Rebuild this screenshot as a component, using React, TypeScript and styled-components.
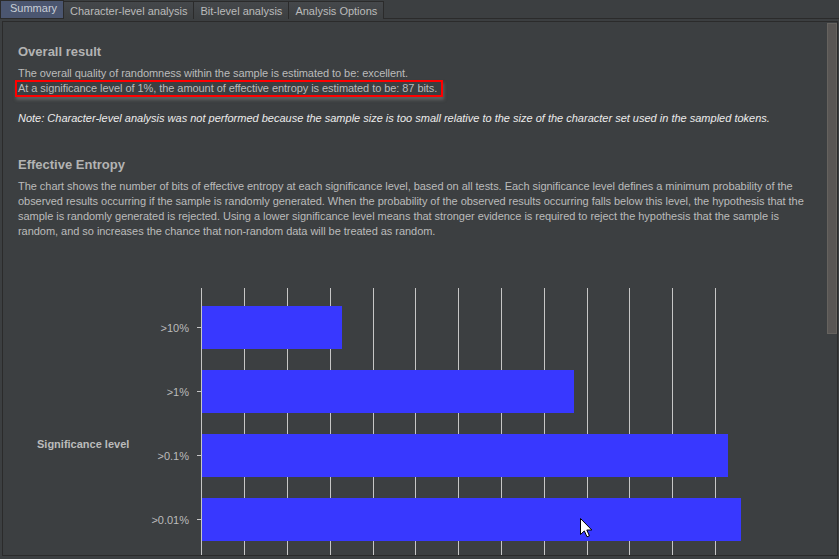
import React from "react";
import styled, { createGlobalStyle } from "styled-components";

const GlobalStyle = createGlobalStyle`
  html, body { margin: 0; padding: 0; background: #3c3f41; overflow: hidden; }
  #root { width: 839px; height: 559px; }
`;

const Root = styled.div`
  position: relative;
  width: 839px;
  height: 559px;
  display: flex;
  flex-direction: column;
  background: #3c3f41;
  font-family: "Liberation Sans", Arial, sans-serif;
  color: #bbbbbb;
  overflow: hidden;
`;

const TabBar = styled.div`
  display: flex;
  height: 19px;
  box-sizing: border-box;
  border-bottom: 1px solid #2b2b2b;
`;

const Tab = styled.div<{ $active?: boolean }>`
  display: flex;
  align-items: center;
  box-sizing: border-box;
  height: 18px;
  margin-top: ${(p) => (p.$active ? "0" : "1px")};
  padding: ${(p) => (p.$active ? "0 6px 3px 9px" : "1px 6px 0 6px")};
  border-top: 1px solid #2b2b2b;
  border-right: 1px solid #2b2b2b;
  background: ${(p) =>
    p.$active ? "#4b5670" : "linear-gradient(#45484b, #3c3f41)"};
  color: ${(p) => (p.$active ? "#c9ced6" : "#bbbbbb")};
  font-size: 11px;
  white-space: nowrap;
  &:first-child {
    border-left: 1px solid #2b2b2b;
  }
`;

const Panel = styled.div`
  flex: 1;
  display: flex;
  margin: 2px 1px 3px 2px;
  border: 1px solid #2b2b2b;
  overflow: hidden;
  min-height: 0;
`;

const Content = styled.div`
  flex: 1;
  min-width: 0;
  padding: 21px 0 0 15px;
  overflow: hidden;
`;

const ScrollTrack = styled.div`
  width: 11px;
  padding-top: 1px;
  box-sizing: border-box;
`;

const Thumb = styled.div`
  margin-left: 1px;
  width: 10px;
  height: 311px;
  box-sizing: border-box;
  background: #595654;
  border: 1px solid #66635f;
`;

const Heading = styled.h2<{ $gap?: number }>`
  margin: ${(p) => p.$gap ?? 0}px 0 0 0;
  font-size: 13px;
  line-height: 17px;
  font-weight: bold;
  color: #b3b3b3;
`;

const TextBlock = styled.div`
  margin-top: 6px;
  font-size: 11px;
  letter-spacing: -0.06px;
  color: #bbbbbb;
  white-space: nowrap;
`;

const Line = styled.div`
  line-height: 14px;
`;

const Highlight = styled.div`
  display: inline-block;
  margin-left: -3px;
  padding: 0 4px 0 1px;
  border: 2px solid #ff0000;
  line-height: 13px;
  box-shadow: 1px 3px 3px rgba(105, 105, 105, 0.75);
`;

const Note = styled.div`
  margin-top: 14px;
  font-size: 11px;
  line-height: 15px;
  letter-spacing: 0;
  font-style: italic;
  color: #ececec;
  white-space: nowrap;
`;

const Paragraph = styled.p`
  margin: 6px 0 0 0;
  font-size: 11px;
  line-height: 15px;
  letter-spacing: -0.04px;
  color: #bbbbbb;
  white-space: nowrap;
`;

const Chart = styled.div`
  margin-top: 49px;
  display: flex;
  height: 312px;
`;

const AxisTitle = styled.div`
  width: 122px;
  box-sizing: border-box;
  padding-left: 19px;
  display: flex;
  align-items: center;
  font-size: 11px;
  font-weight: bold;
  color: #bbbbbb;
`;

const PlotBody = styled.div`
  position: relative;
  display: flex;
  flex-direction: column;
  gap: 21px;
  padding-top: 18px;
`;

const GridLayer = styled.div`
  position: absolute;
  top: 0;
  bottom: 0;
  left: 61px;
  width: 540px;
`;

const GridLine = styled.div`
  position: absolute;
  top: 0;
  bottom: 0;
  width: 1px;
  background: #c6c6c6;
`;

const Row = styled.div`
  position: relative;
  display: grid;
  grid-template-columns: 49px 12px 540px;
  height: 43px;
  align-items: center;
`;

const CatLabel = styled.div`
  text-align: right;
  font-size: 11px;
  color: #bbbbbb;
`;

const Tick = styled.div`
  justify-self: end;
  width: 4px;
  height: 1px;
  background: #c6c6c6;
`;

const Bar = styled.div`
  margin-left: 1px;
  height: 43px;
  background: #3838ff;
`;

const Cursor = styled.svg`
  position: absolute;
  left: 580px;
  top: 518px;
`;

const SCALE = 4.28;
const data = [
  { label: ">10%", bits: 32.8 },
  { label: ">1%", bits: 86.8 },
  { label: ">0.1%", bits: 122.9 },
  { label: ">0.01%", bits: 126 },
];
const grid = Array.from({ length: 13 }, (_, i) => Math.round(0.4 + 42.8 * i));

export default function App() {
  return (
    <Root>
      <GlobalStyle />
      <TabBar>
        <Tab $active>Summary</Tab>
        <Tab>Character-level analysis</Tab>
        <Tab>Bit-level analysis</Tab>
        <Tab>Analysis Options</Tab>
      </TabBar>
      <Panel>
        <Content>
          <Heading>Overall result</Heading>
          <TextBlock>
            <Line>
              The overall quality of randomness within the sample is estimated to be: excellent.
            </Line>
            <Highlight>
              At a significance level of 1%, the amount of effective entropy is estimated to be: 87 bits.
            </Highlight>
          </TextBlock>
          <Note>
            Note: Character-level analysis was not performed because the sample size is too small
            relative to the size of the character set used in the sampled tokens.
          </Note>
          <Heading $gap={30}>Effective Entropy</Heading>
          <Paragraph>
            The chart shows the number of bits of effective entropy at each significance level, based on
            all tests. Each significance level defines a minimum probability of the
            <br />
            observed results occurring if the sample is randomly generated. When the probability of the
            observed results occurring falls below this level, the hypothesis that the
            <br />
            sample is randomly generated is rejected. Using a lower significance level means that
            stronger evidence is required to reject the hypothesis that the sample is
            <br />
            random, and so increases the chance that non-random data will be treated as random.
          </Paragraph>
          <Chart>
            <AxisTitle>Significance level</AxisTitle>
            <PlotBody>
              <GridLayer>
                {grid.map((x) => (
                  <GridLine key={x} style={{ left: x }} />
                ))}
              </GridLayer>
              {data.map((d) => (
                <Row key={d.label}>
                  <CatLabel>{d.label}</CatLabel>
                  <Tick />
                  <Bar style={{ width: Math.round(d.bits * SCALE) }} />
                </Row>
              ))}
            </PlotBody>
          </Chart>
        </Content>
        <ScrollTrack>
          <Thumb />
        </ScrollTrack>
      </Panel>
      <Cursor width="13" height="20" viewBox="0 0 13 20">
        <path
          d="M0.5 0.5 L0.5 16.5 L4.3 12.9 L7 18.8 L9.4 17.8 L6.8 12 L11.8 12 Z"
          fill="#ffffff"
          stroke="#000000"
          strokeWidth="1"
          strokeLinejoin="miter"
        />
      </Cursor>
    </Root>
  );
}
